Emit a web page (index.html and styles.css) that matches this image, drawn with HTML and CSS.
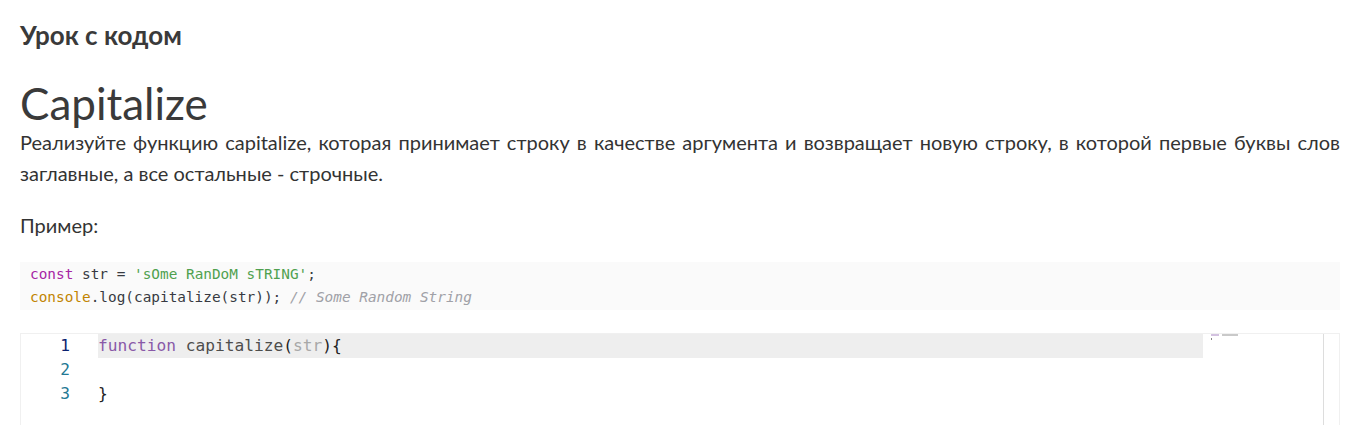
FILE: index.html
```html
<!DOCTYPE html>
<html lang="ru">
<head>
<meta charset="utf-8">
<title>Capitalize</title>
<link rel="stylesheet" href="styles.css">
</head>
<body>
<main class="lesson">
  <h3 class="lesson-kind">Урок с кодом</h3>
  <h1 class="lesson-title">Capitalize</h1>
  <p class="lesson-text">Реализуйте функцию capitalize, которая принимает строку в качестве аргумента и возвращает новую строку, в которой первые буквы слов заглавные, а все остальные - строчные.</p>
  <p class="lesson-text example-label">Пример:</p>
  <pre class="example"><code><span class="hl-kw">const</span> str = <span class="hl-str">'sOme RanDoM sTRING'</span>;
<span class="hl-built">console</span>.log(capitalize(str)); <span class="hl-cmt">// Some Random String</span></code></pre>

  <div class="editor">
    <div class="gutter">
      <div class="ln ln-active">1</div>
      <div class="ln">2</div>
      <div class="ln">3</div>
    </div>
    <div class="code-area">
      <div class="code-line current"><span class="tk-kw">function</span> <span class="tk-fn">capitalize</span><span class="tk-punc">(</span><span class="tk-param">str</span><span class="tk-punc">){</span></div>
      <div class="code-line"></div>
      <div class="code-line"><span class="tk-punc">}</span></div>
    </div>
    <div class="minimap">
      <div class="mini-row">
        <span class="mini-bar mini-kw"></span>
        <span class="mini-bar mini-txt"></span>
      </div>
      <div class="mini-row"></div>
      <div class="mini-row">
        <span class="mini-bar mini-brace"></span>
      </div>
    </div>
    <div class="scrollbar"></div>
  </div>
</main>
</body>
</html>
```
FILE: styles.css
```css
html, body {
  margin: 0;
  padding: 0;
  background: #ffffff;
}

body {
  font-family: Lato, "Open Sans", sans-serif;
  color: #333333;
}

.lesson {
  padding: 0 20px;
}

.lesson-kind {
  margin: 0;
  padding-top: 18px;
  font-size: 26px;
  line-height: 34px;
  font-weight: 700;
  color: #3a3a3a;
}

.lesson-title {
  margin: 27px 0 0;
  font-size: 44px;
  line-height: 48px;
  font-weight: 400;
  color: #3a3a3a;
}

.lesson-text {
  margin: 0;
  font-size: 20px;
  line-height: 31px;
  text-align: justify;
  color: #333333;
}

.example-label {
  margin-top: 21px;
}

.example {
  margin: 21px 0 0;
  padding: 1px 10px;
  background: #fafafa;
  font-family: "DejaVu Sans Mono", "Liberation Mono", monospace;
  font-size: 14.4px;
  line-height: 23px;
  color: #383a42;
}

.hl-kw { color: #a626a4; }
.hl-str { color: #50a14f; }
.hl-built { color: #c18401; }
.hl-cmt { color: #a0a1a7; font-style: italic; }

.editor {
  margin-top: 23px;
  display: flex;
  height: 91px;
  border-top: 1px solid #f0f0f0;
  border-left: 1px solid #f0f0f0;
  border-right: 1px solid #f0f0f0;
  font-family: "DejaVu Sans Mono", "Liberation Mono", monospace;
  font-size: 16.2px;
  line-height: 24px;
}

.gutter {
  width: 49px;
  padding-right: 28px;
  text-align: right;
  color: #237893;
}

.ln-active {
  color: #0b216f;
}

.code-area {
  flex: 1;
  color: #4d4d4c;
}

.code-line {
  height: 24px;
  white-space: pre;
}

.code-line.current {
  background: #eeeeee;
}

.tk-kw { color: #8959a8; }
.tk-fn { color: #4d4d4c; }
.tk-punc { color: #222222; }
.tk-param { color: #a8a8a8; }

.minimap {
  width: 112px;
  padding-left: 8px;
}

.mini-row {
  display: flex;
  gap: 3px;
  height: 2px;
}

.mini-bar {
  display: block;
  height: 2px;
}

.mini-kw { width: 8px; background: #d3c2e0; }
.mini-txt { width: 16px; background: #c9c9c9; }
.mini-brace { width: 1px; background: #888888; }

.scrollbar {
  width: 15px;
  border-left: 1px solid #dddddd;
}
```
